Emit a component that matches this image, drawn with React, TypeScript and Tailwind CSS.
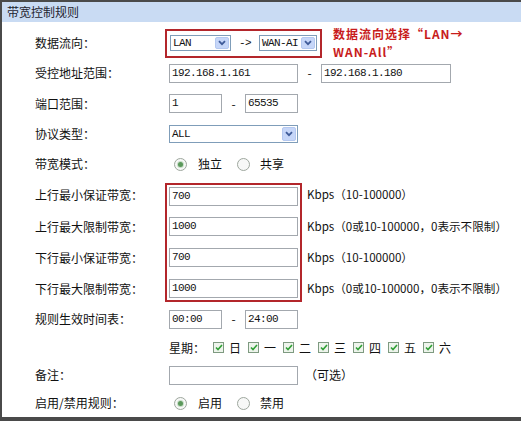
import React from "react";

const mono = "font-['Liberation_Mono',monospace] text-[11px] tracking-[-0.6px] text-[#111]";

function Chevron() {
  return (
    <svg width="8" height="6" viewBox="0 0 8 6">
      <path d="M1 1.2 L4 4.2 L7 1.2" fill="none" stroke="#3f5b99" strokeWidth="1.8" />
    </svg>
  );
}

function Select({ className, value }: { className: string; value: string }) {
  return (
    <div className={`flex items-stretch border border-[#7f9db9] bg-white ${className}`}>
      <div className={`flex flex-1 items-center pl-[2px] ${mono}`}>{value}</div>
      <div className="m-[1px] flex w-[14px] items-center justify-center rounded-[2px] border border-[#b4c8f0] bg-[#c6d6f8]">
        <Chevron />
      </div>
    </div>
  );
}

function Input({ className, value = "" }: { className: string; value?: string }) {
  return (
    <div className={`flex h-[19px] items-center border border-[#a3a8ae] bg-white pl-[2px] ${mono} ${className}`}>
      {value}
    </div>
  );
}

function Radio({ checked }: { checked?: boolean }) {
  return (
    <div className="flex h-[13px] w-[13px] items-center justify-center rounded-full border border-[#9ea79e] bg-[#f7f8f7]">
      {checked && <div className="h-[5px] w-[5px] rounded-full bg-[#5b985b] ring-1 ring-[#c9dec9]" />}
    </div>
  );
}

function Check() {
  return (
    <div className="flex h-[11px] w-[11px] items-center justify-center border border-[#7e9a80] bg-[#eef4ec]">
      <svg width="8" height="7" viewBox="0 0 8 7">
        <path d="M1 3.5 L3 5.5 L7 1" fill="none" stroke="#2f9f35" strokeWidth="1.6" />
      </svg>
    </div>
  );
}

function Row({ h, label, children }: { h: string; label?: string; children?: React.ReactNode }) {
  return (
    <div className={`flex items-center ${h}`}>
      <div className="w-[167px] shrink-0 pl-[33px] text-[#111]">{label}</div>
      {children}
    </div>
  );
}

function Dash({ className = "w-[23px]" }: { className?: string }) {
  return <div className={`text-center text-[#111] ${className}`}>-</div>;
}

function RadioPair({ a, b }: { a: string; b: string }) {
  return (
    <div className="ml-[5px] flex items-center">
      <Radio checked />
      <span className="ml-[11px] text-[#111]">{a}</span>
      <div className="ml-[15px]">
        <Radio />
      </div>
      <span className="ml-[10px] text-[#111]">{b}</span>
    </div>
  );
}

export default function App() {
  const days = ["日", "一", "二", "三", "四", "五", "六"];
  return (
    <div className="h-[421px] w-[521px] overflow-hidden border-b-4 border-l-2 border-t-2 border-[#4a4a4a] bg-white font-['Noto_Sans_CJK_SC',sans-serif] text-[12px]">
      <div className="flex h-[20px] items-center bg-[#c9dbf3] pl-[5px] text-[12px] text-[#1f2430]">带宽控制规则</div>
      <div className="pt-[6px]">
        <Row h="h-[30px]" label="数据流向：">
          <div className="ml-[-4px] flex h-[29px] w-[157px] items-center border-2 border-[#b3262b] pl-[3px]">
            <Select className="h-[16px] w-[61px]" value="LAN" />
            <div className={`w-[28px] text-center ${mono}`}>-&gt;</div>
            <Select className="h-[16px] w-[58px]" value="WAN-AI" />
          </div>
          <div className="ml-[11px] mt-[-3px] flex flex-col self-start text-[12px] font-bold tracking-[1px] text-[#c81c1c]">
            <div className="leading-[18px]">数据流向选择“LAN→</div>
            <div className="leading-[18px]">WAN-All”</div>
          </div>
        </Row>
        <Row h="h-[30px]" label="受控地址范围：">
          <Input className="w-[129px]" value="192.168.1.161" />
          <Dash />
          <Input className="w-[130px]" value="192.168.1.180" />
        </Row>
        <Row h="h-[31px]" label="端口范围：">
          <Input className="w-[53px]" value="1" />
          <Dash />
          <Input className="w-[53px]" value="65535" />
        </Row>
        <Row h="h-[30px]" label="协议类型：">
          <Select className="h-[18px] w-[129px]" value="ALL" />
        </Row>
        <Row h="h-[30px]" label="带宽模式：">
          <RadioPair a="独立" b="共享" />
        </Row>
        <div className="flex h-[125px]">
          <div className="flex w-[163px] shrink-0 flex-col pl-[33px] text-[#111]">
            <div className="flex h-[32px] items-center">上行最小保证带宽：</div>
            <div className="flex h-[31px] items-center">上行最大限制带宽：</div>
            <div className="flex h-[31px] items-center">下行最小保证带宽：</div>
            <div className="flex h-[31px] items-center">下行最大限制带宽：</div>
          </div>
          <div className="mt-[4px] flex h-[119px] w-[137px] flex-col border-2 border-[#b3262b] px-[2px] pt-[2px]">
            <Input className="w-[129px]" value="700" />
            <Input className="mt-[11px] w-[129px]" value="1000" />
            <Input className="mt-[12px] w-[129px]" value="700" />
            <Input className="mt-[12px] w-[129px]" value="1000" />
          </div>
          <div className="ml-[5px] flex flex-col text-[11.6px] text-[#111]">
            <div className="flex h-[32px] items-center">Kbps（10-100000）</div>
            <div className="flex h-[31px] items-center">Kbps（0或10-100000，0表示不限制）</div>
            <div className="flex h-[31px] items-center">Kbps（10-100000）</div>
            <div className="flex h-[31px] items-center">Kbps（0或10-100000，0表示不限制）</div>
          </div>
        </div>
        <Row h="h-[30px]" label="规则生效时间表：">
          <Input className="w-[53px]" value="00:00" />
          <Dash />
          <Input className="w-[53px]" value="24:00" />
        </Row>
        <Row h="h-[27px]">
          <span className="w-[44px] text-[#111]">星期：</span>
          {days.map((d) => (
            <div key={d} className="flex w-[35px] items-center">
              <Check />
              <span className="ml-[5px] text-[#111]">{d}</span>
            </div>
          ))}
        </Row>
        <Row h="h-[28px]" label="备注：">
          <Input className="w-[129px]" />
          <span className="ml-[7px] text-[#111]">（可选）</span>
        </Row>
        <Row h="h-[28px]" label="启用/禁用规则：">
          <RadioPair a="启用" b="禁用" />
        </Row>
      </div>
    </div>
  );
}
